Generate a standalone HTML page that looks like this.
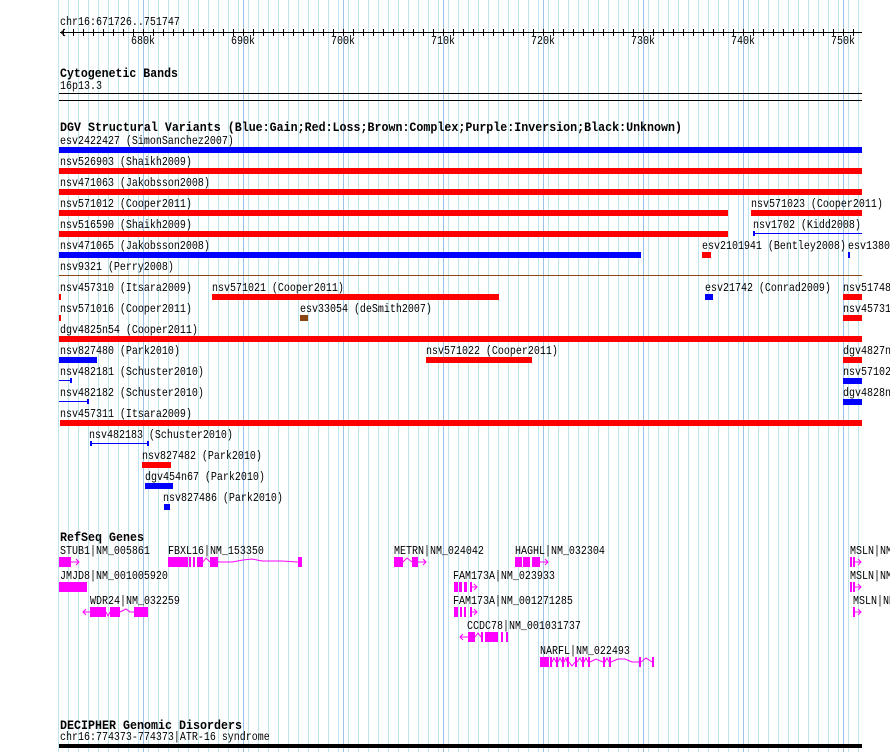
<!DOCTYPE html>
<html><head><meta charset="utf-8"><style>
html,body{margin:0;padding:0;background:#fff;width:890px;height:752px;overflow:hidden}
svg{display:block}
text{font-family:"Liberation Mono",monospace;font-size:12px;fill:#000}
.h{font-weight:bold;font-size:13px}
</style></head><body>
<svg width="890" height="752" viewBox="0 0 890 752" xmlns="http://www.w3.org/2000/svg" shape-rendering="crispEdges">
<defs>
<pattern id="g" x="58" y="0" width="10" height="752" patternUnits="userSpaceOnUse"><rect x="0" y="0" width="1" height="752" fill="#bde6ec"/></pattern>
<pattern id="tk" x="63" y="29" width="10" height="7" patternUnits="userSpaceOnUse"><rect x="0" y="0" width="1" height="7" fill="#000"/></pattern>
</defs>
<rect x="58" y="0" width="803" height="752" fill="url(#g)"/>
<g fill="#9cc2e8">
<rect x="143" y="0" width="1" height="752"/><rect x="243" y="0" width="1" height="752"/><rect x="343" y="0" width="1" height="752"/><rect x="443" y="0" width="1" height="752"/><rect x="543" y="0" width="1" height="752"/><rect x="643" y="0" width="1" height="752"/><rect x="743" y="0" width="1" height="752"/><rect x="843" y="0" width="1" height="752"/>
</g>
<rect x="60" y="32" width="802" height="1" fill="#000"/>
<rect x="63" y="29" width="800" height="7" fill="url(#tk)"/>
<path d="M65 29 L61 32.5 L65 36" stroke="#000" fill="none" shape-rendering="auto"/>
<rect x="59" y="93" width="803" height="1" fill="#000"/>
<rect x="59" y="100" width="803" height="1" fill="#000"/>

<text class="h" x="60" y="77" textLength="118" lengthAdjust="spacingAndGlyphs">Cytogenetic Bands</text>
<text class="h" x="60" y="131" textLength="622" lengthAdjust="spacingAndGlyphs">DGV Structural Variants (Blue:Gain;Red:Loss;Brown:Complex;Purple:Inversion;Black:Unknown)</text>
<text class="h" x="60" y="541" textLength="84" lengthAdjust="spacingAndGlyphs">RefSeq Genes</text>
<text class="h" x="60" y="729" textLength="182" lengthAdjust="spacingAndGlyphs">DECIPHER Genomic Disorders</text>

<g transform="scale(0.83333 1)">
<text x="72" y="25">chr16:671726..751747</text>
<text x="157.2" y="44">680k</text><text x="277.2" y="44">690k</text><text x="397.2" y="44">700k</text><text x="517.2" y="44">710k</text><text x="637.2" y="44">720k</text><text x="757.2" y="44">730k</text><text x="877.2" y="44">740k</text><text x="997.2" y="44">750k</text>
<text x="72" y="89">16p13.3</text>
<text x="72" y="144">esv2422427 (SimonSanchez2007)</text>
<text x="72" y="165">nsv526903 (Shaikh2009)</text>
<text x="72" y="186">nsv471063 (Jakobsson2008)</text>
<text x="72" y="207">nsv571012 (Cooper2011)</text>
<text x="901.2" y="207">nsv571023 (Cooper2011)</text>
<text x="72" y="228">nsv516590 (Shaikh2009)</text>
<text x="903.6" y="228">nsv1702 (Kidd2008)</text>
<text x="72" y="249">nsv471065 (Jakobsson2008)</text>
<text x="842.4" y="249">esv2101941 (Bentley2008)</text>
<text x="1017.6" y="249">esv1380</text>
<text x="72" y="270">nsv9321 (Perry2008)</text>
<text x="72" y="291">nsv457310 (Itsara2009)</text>
<text x="254.4" y="291">nsv571021 (Cooper2011)</text>
<text x="846" y="291">esv21742 (Conrad2009)</text>
<text x="1011.6" y="291">nsv51748</text>
<text x="72" y="312">nsv571016 (Cooper2011)</text>
<text x="360" y="312">esv33054 (deSmith2007)</text>
<text x="1011.6" y="312">nsv45731</text>
<text x="72" y="333">dgv4825n54 (Cooper2011)</text>
<text x="72" y="354">nsv827480 (Park2010)</text>
<text x="511.2" y="354">nsv571022 (Cooper2011)</text>
<text x="1011.6" y="354">dgv4827n</text>
<text x="72" y="375">nsv482181 (Schuster2010)</text>
<text x="1011.6" y="375">nsv57102</text>
<text x="72" y="396">nsv482182 (Schuster2010)</text>
<text x="1011.6" y="396">dgv4828n</text>
<text x="72" y="417">nsv457311 (Itsara2009)</text>
<text x="106.8" y="438">nsv482183 (Schuster2010)</text>
<text x="170.4" y="459">nsv827482 (Park2010)</text>
<text x="174" y="480">dgv454n67 (Park2010)</text>
<text x="195.6" y="501">nsv827486 (Park2010)</text>
<text x="72" y="554">STUB1|NM_005861</text>
<text x="201.6" y="554">FBXL16|NM_153350</text>
<text x="472.8" y="554">METRN|NM_024042</text>
<text x="618" y="554">HAGHL|NM_032304</text>
<text x="1020" y="554">MSLN|NM</text>
<text x="72" y="579">JMJD8|NM_001005920</text>
<text x="1020" y="579">MSLN|NM</text>
<text x="108" y="604">WDR24|NM_032259</text>
<text x="543.6" y="579">FAM173A|NM_023933</text>
<text x="543.6" y="604">FAM173A|NM_001271285</text>
<text x="1023.6" y="604">MSLN|NM</text>
<text x="560.4" y="629">CCDC78|NM_001031737</text>
<text x="648" y="654">NARFL|NM_022493</text>
<text x="72" y="740">chr16:774373-774373|ATR-16 syndrome</text>
</g>

<rect x="59" y="147" width="803" height="6" fill="#0000ff"/>
<rect x="59" y="168" width="803" height="6" fill="#ff0000"/>
<rect x="59" y="189" width="803" height="6" fill="#ff0000"/>
<rect x="59" y="210" width="669" height="6" fill="#ff0000"/>
<rect x="751" y="210" width="111" height="6" fill="#ff0000"/>
<rect x="59" y="231" width="669" height="6" fill="#ff0000"/>
<rect x="753" y="233" width="109" height="1" fill="#0000ff"/><rect x="753" y="231" width="2" height="5" fill="#0000ff"/>
<rect x="59" y="252" width="582" height="6" fill="#0000ff"/>
<rect x="702" y="252" width="9" height="6" fill="#ff0000"/>
<rect x="848" y="252" width="2" height="6" fill="#0000ff"/>
<rect x="59" y="275" width="803" height="1" fill="#8b4513"/>
<rect x="59" y="294" width="2" height="6" fill="#ff0000"/>
<rect x="212" y="294" width="287" height="6" fill="#ff0000"/>
<rect x="705" y="294" width="8" height="6" fill="#0000ff"/>
<rect x="843" y="294" width="19" height="6" fill="#ff0000"/>
<rect x="59" y="315" width="2" height="6" fill="#ff0000"/>
<rect x="300" y="315" width="8" height="6" fill="#8b4513"/>
<rect x="843" y="315" width="19" height="6" fill="#ff0000"/>
<rect x="59" y="336" width="803" height="6" fill="#ff0000"/>
<rect x="59" y="357" width="38" height="6" fill="#0000ff"/>
<rect x="426" y="357" width="106" height="6" fill="#ff0000"/>
<rect x="843" y="357" width="19" height="6" fill="#ff0000"/>
<rect x="59" y="380" width="12" height="1" fill="#0000ff"/><rect x="70" y="378" width="2" height="5" fill="#0000ff"/>
<rect x="843" y="378" width="19" height="6" fill="#0000ff"/>
<rect x="59" y="401" width="29" height="1" fill="#0000ff"/><rect x="87" y="399" width="2" height="5" fill="#0000ff"/>
<rect x="843" y="399" width="19" height="6" fill="#0000ff"/>
<rect x="60" y="420" width="802" height="6" fill="#ff0000"/>
<rect x="90" y="443" width="58" height="1" fill="#0000ff"/><rect x="90" y="441" width="2" height="5" fill="#0000ff"/><rect x="147" y="441" width="2" height="5" fill="#0000ff"/>
<rect x="142" y="462" width="29" height="6" fill="#ff0000"/>
<rect x="145" y="483" width="28" height="6" fill="#0000ff"/>
<rect x="164" y="504" width="6" height="6" fill="#0000ff"/>

<g fill="#ff00ff">
<rect x="59" y="557" width="12" height="10"/>
<rect x="168" y="557" width="20" height="10"/><rect x="189" y="557" width="2" height="10"/><rect x="193" y="557" width="2" height="10"/><rect x="197" y="557" width="6" height="10"/><rect x="210" y="557" width="8" height="10"/><rect x="298" y="557" width="4" height="10"/>
<rect x="394" y="557" width="9" height="10"/><rect x="412" y="557" width="6" height="10"/>
<rect x="515" y="557" width="7" height="10"/><rect x="523" y="557" width="7" height="10"/><rect x="532" y="557" width="8" height="10"/>
<rect x="850" y="557" width="2" height="10"/><rect x="853" y="557" width="2" height="10"/>
<rect x="850" y="582" width="2" height="10"/><rect x="853" y="582" width="2" height="10"/>
<rect x="853" y="607" width="2" height="10"/>
<rect x="59" y="582" width="28" height="10"/>
<rect x="90" y="607" width="16" height="10"/><rect x="110" y="607" width="10" height="10"/><rect x="134" y="607" width="14" height="10"/>
<rect x="454" y="582" width="4" height="10"/><rect x="459" y="582" width="3" height="10"/><rect x="464" y="582" width="3" height="10"/><rect x="470" y="582" width="2" height="10"/>
<rect x="454" y="607" width="4" height="10"/><rect x="460" y="607" width="2" height="10"/><rect x="464" y="607" width="2" height="10"/><rect x="470" y="607" width="2" height="10"/>
<rect x="468" y="632" width="7" height="10"/><rect x="481" y="632" width="2" height="10"/><rect x="485" y="632" width="13" height="10"/><rect x="501" y="632" width="2" height="10"/><rect x="506" y="632" width="2" height="10"/>
<rect x="540" y="657" width="9" height="10"/><rect x="550" y="657" width="2" height="10"/><rect x="556" y="657" width="2" height="10"/><rect x="562" y="657" width="2" height="10"/><rect x="567" y="657" width="2" height="10"/><rect x="575" y="657" width="2" height="10"/><rect x="582" y="657" width="2" height="10"/><rect x="588" y="657" width="2" height="10"/><rect x="603" y="657" width="2" height="10"/><rect x="609" y="657" width="2" height="10"/><rect x="639" y="657" width="2" height="10"/><rect x="652" y="657" width="2" height="10"/>
</g>
<g stroke="#ff00ff" fill="none" stroke-width="1" shape-rendering="auto">
<path d="M71 562 H79 M76 559 L79 562 L76 565"/>
<path d="M203 562 L206 558 L210 562 M218 562 L232 562 L243 560 L252 559 L262 561 L282 561 L298 562"/>
<path d="M403 562 L407 558 L412 562 M418 562 H426 M423 559 L426 562 L423 565"/>
<path d="M540 562 H548 M545 559 L548 562 L545 565"/>
<path d="M855 562 H861 M858 559 L861 562 L858 565 M855 587 H861 M858 584 L861 587 L858 590 M855 612 H861 M858 609 L861 612 L858 615"/>
<path d="M472 587 H477 M474 584 L477 587 L474 590 M472 612 H477 M474 609 L477 612 L474 615"/>
<path d="M83 612 H90 M86 609 L83 612 L86 615 M106 612 L108 616 L110 612 M120 612 L126 609 L130 612 L134 612"/>
<path d="M460 637 H468 M463 634 L460 637 L463 640 M475 637 L478 633 L481 637"/>
<path d="M552 662 L554 658 L556 662 M558 662 L560 658 L562 662 M564 662 L566 658 L567 662 M569 662 L572 666 L575 662 M577 662 L580 658 L582 662 M584 662 L586 658 L588 662 M590 662 L596 659 L603 662 M605 662 L607 658 L609 662 M611 662 L618 659 L625 659 L632 662 L639 662 M641 662 L646 658 L652 662"/>
</g>
<rect x="59" y="744" width="803" height="4" fill="#000"/>
</svg>
</body></html>
